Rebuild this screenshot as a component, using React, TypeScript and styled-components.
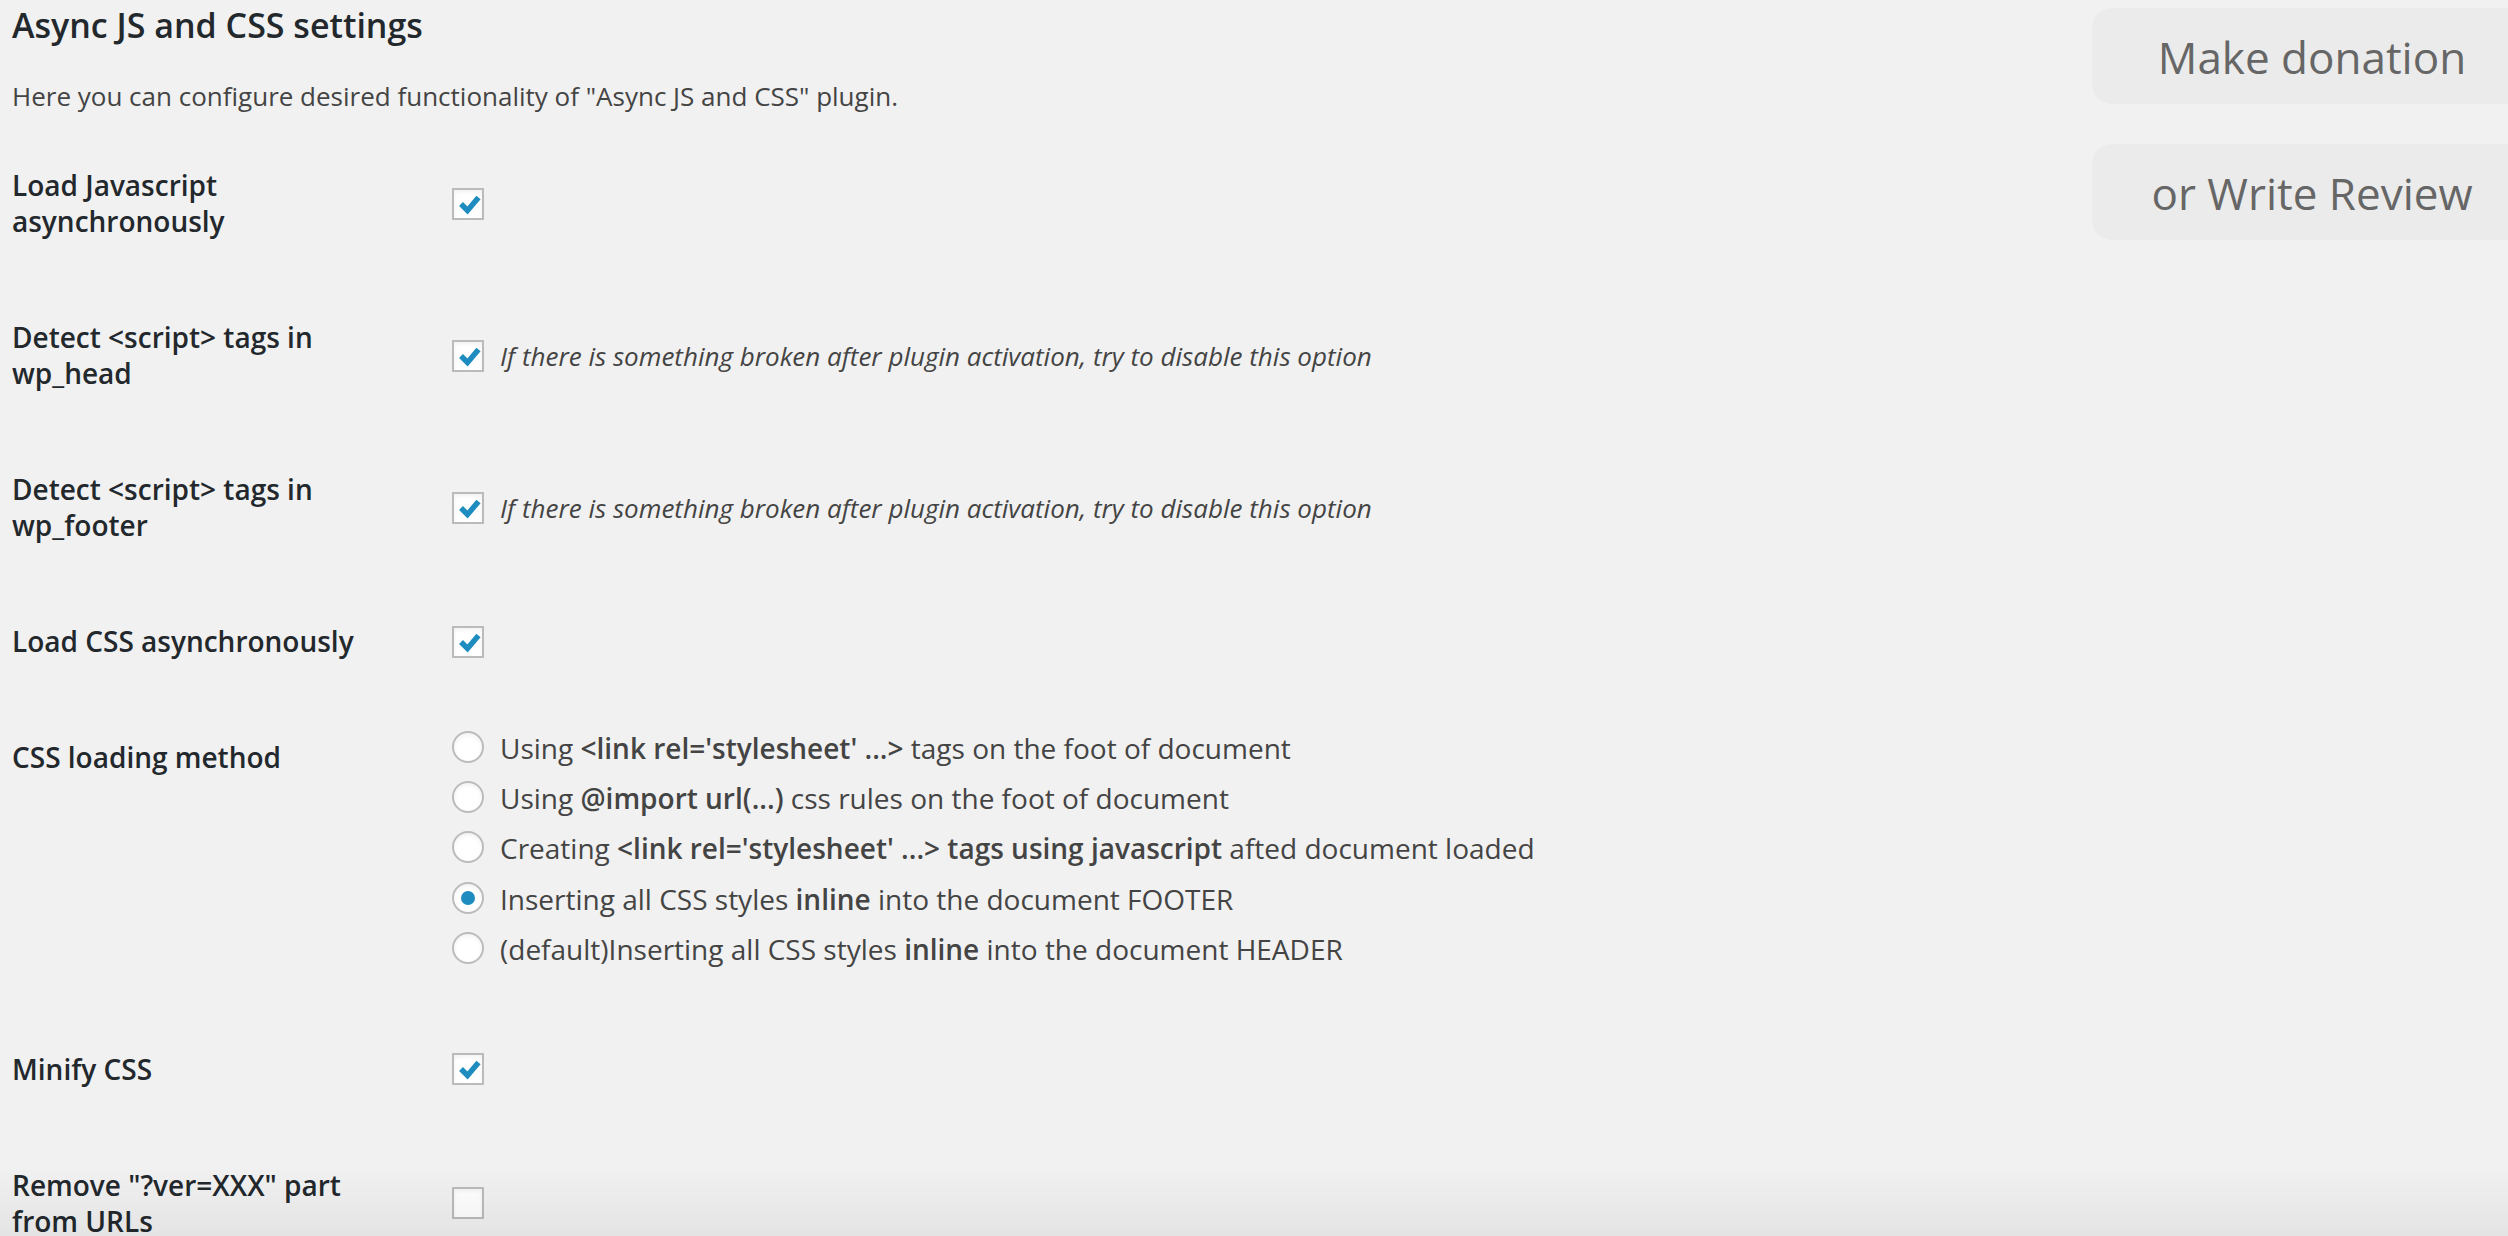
import React from 'react';
import styled, { createGlobalStyle } from 'styled-components';

const GlobalStyle = createGlobalStyle`
  html, body {
    margin: 0;
    padding: 0;
    background: #f1f1f1;
    overflow: hidden;
  }
  body {
    font-family: "Open Sans", "Liberation Sans", sans-serif;
    color: #444;
  }
`;

const Page = styled.div`
  display: flex;
  align-items: flex-start;
  padding-left: 12px;
  min-height: 1236px;
  box-sizing: border-box;
`;

const Main = styled.main`
  flex: 1;
  min-width: 0;
`;

const Sidebar = styled.aside`
  width: 440px;
  flex: none;
  margin-right: -24px;
  padding-top: 8px;
  display: flex;
  flex-direction: column;
  gap: 40px;
`;

const SideButton = styled.a`
  display: block;
  height: 96px;
  box-sizing: border-box;
  padding-top: 2px;
  line-height: 94px;
  border-radius: 20px;
  background: #ebebeb;
  color: #666;
  font-size: 44px;
  text-align: center;
  text-decoration: none;
`;

const Title = styled.h2`
  margin: 3px 0 0;
  font-size: 34px;
  line-height: 44px;
  font-weight: 600;
  color: #23282d;
`;

const Intro = styled.p`
  margin: 30px 0 11.5px;
  font-size: 26px;
  line-height: 39px;
  color: #444;
`;

const Row = styled.div`
  display: flex;
`;

const Label = styled.div`
  width: 400px;
  flex: none;
  padding: 39.5px 20px 40.5px 0;
  font-size: 28px;
  line-height: 36px;
  font-weight: 600;
  color: #23282d;
`;

const Field = styled.div`
  flex: 1;
  padding: 30px 20px;
  display: flex;
  align-items: center;
  gap: 16px;
`;

const Box = styled.span`
  width: 32px;
  height: 32px;
  box-sizing: border-box;
  border: 2px solid #bbb;
  background: #fff;
  box-shadow: inset 0 2px 4px rgba(0, 0, 0, 0.06);
  flex: none;
  display: inline-block;
  position: relative;
`;

const CheckSvg = styled.svg`
  position: absolute;
  left: -2px;
  top: -2px;
  width: 32px;
  height: 32px;
`;

const Hint = styled.span`
  font-size: 26px;
  line-height: 36px;
  font-style: italic;
  color: #444;
`;

const Options = styled.div`
  display: flex;
  flex-direction: column;
`;

const Option = styled.label`
  display: flex;
  align-items: flex-start;
  gap: 16px;
  height: 50.4px;
`;

const Radio = styled.span<{ $checked?: boolean }>`
  width: 32px;
  height: 32px;
  margin-top: 1px;
  box-sizing: border-box;
  border: 2px solid #bbb;
  border-radius: 50%;
  background: #fff;
  box-shadow: inset 0 2px 4px rgba(0, 0, 0, 0.06);
  flex: none;
  display: flex;
  align-items: center;
  justify-content: center;

  &::before {
    content: "";
    display: ${(p) => (p.$checked ? 'block' : 'none')};
    width: 14px;
    height: 14px;
    border-radius: 50%;
    background: #1e8cbe;
  }
`;

const OptionText = styled.span`
  font-size: 28px;
  line-height: 36px;
  color: #444;

  strong {
    font-weight: 600;
  }
`;

const Shade = styled.div`
  position: fixed;
  left: 0;
  right: 0;
  bottom: 0;
  height: 70px;
  pointer-events: none;
  background: linear-gradient(to bottom, rgba(0, 0, 0, 0), rgba(0, 0, 0, 0.05));
`;

const Checkbox = ({ checked }: { checked?: boolean }) => (
  <Box>
    {checked && (
      <CheckSvg viewBox="0 0 32 32">
        <path
          d="M9 16 L15.5 22.5 L26.5 9.5"
          fill="none"
          stroke="#1e8cbe"
          strokeWidth="5.5"
          strokeLinejoin="miter"
        />
      </CheckSvg>
    )}
  </Box>
);

const hint = 'If there is something broken after plugin activation, try to disable this option';

export default function App() {
  return (
    <>
      <GlobalStyle />
      <Page>
        <Main>
          <Title>Async JS and CSS settings</Title>
          <Intro>Here you can configure desired functionality of "Async JS and CSS" plugin.</Intro>

          <Row>
            <Label>Load Javascript asynchronously</Label>
            <Field>
              <Checkbox checked />
            </Field>
          </Row>
          <Row>
            <Label>Detect &lt;script&gt; tags in wp_head</Label>
            <Field>
              <Checkbox checked />
              <Hint>{hint}</Hint>
            </Field>
          </Row>
          <Row>
            <Label>Detect &lt;script&gt; tags in wp_footer</Label>
            <Field>
              <Checkbox checked />
              <Hint>{hint}</Hint>
            </Field>
          </Row>
          <Row>
            <Label>Load CSS asynchronously</Label>
            <Field>
              <Checkbox checked />
            </Field>
          </Row>
          <Row>
            <Label>CSS loading method</Label>
            <Field>
              <Options>
                <Option>
                  <Radio />
                  <OptionText>
                    Using <strong>&lt;link rel='stylesheet' ...&gt;</strong> tags on the foot of document
                  </OptionText>
                </Option>
                <Option>
                  <Radio />
                  <OptionText>
                    Using <strong>@import url(...)</strong> css rules on the foot of document
                  </OptionText>
                </Option>
                <Option>
                  <Radio />
                  <OptionText>
                    Creating <strong>&lt;link rel='stylesheet' ...&gt; tags using javascript</strong> afted document loaded
                  </OptionText>
                </Option>
                <Option>
                  <Radio $checked />
                  <OptionText>
                    Inserting all CSS styles <strong>inline</strong> into the document FOOTER
                  </OptionText>
                </Option>
                <Option>
                  <Radio />
                  <OptionText>
                    (default)Inserting all CSS styles <strong>inline</strong> into the document HEADER
                  </OptionText>
                </Option>
              </Options>
            </Field>
          </Row>
          <Row>
            <Label>Minify CSS</Label>
            <Field>
              <Checkbox checked />
            </Field>
          </Row>
          <Row>
            <Label>Remove "?ver=XXX" part from URLs</Label>
            <Field>
              <Checkbox />
            </Field>
          </Row>
        </Main>
        <Sidebar>
          <SideButton href="#">Make donation</SideButton>
          <SideButton href="#">or Write Review</SideButton>
        </Sidebar>
      </Page>
      <Shade />
    </>
  );
}
